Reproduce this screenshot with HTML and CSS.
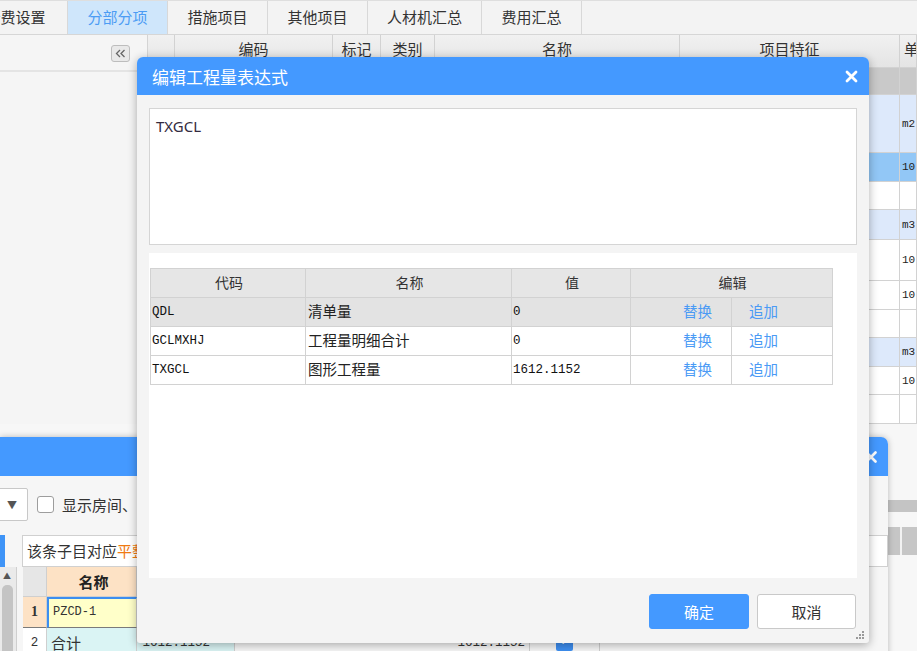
FILE: index.html
```html
<!DOCTYPE html>
<html lang="zh-CN">
<head>
<meta charset="utf-8">
<title>编辑工程量表达式</title>
<link rel="stylesheet" href="styles.css">
</head>
<body>
<div class="app">
  <div class="tabs">
    <div class="tab first">计费设置</div>
    <div class="tab active">分部分项</div>
    <div class="tab">措施项目</div>
    <div class="tab">其他项目</div>
    <div class="tab wide">人材机汇总</div>
    <div class="tab">费用汇总</div>
  </div>
  <div class="work">
    <div class="side">
      <div class="side-head">
        <span class="collapse"><svg width="17" height="15" viewBox="0 0 17 15"><path d="M8 4 L4.5 7.5 L8 11 M12.5 4 L9 7.5 L12.5 11" fill="none" stroke="#666" stroke-width="1.3"/></svg></span>
      </div>
    </div>
    <div class="grid">
      <div class="grow ghead">
        <div class="gc"></div><div class="gc">编码</div><div class="gc">标记</div><div class="gc">类别</div><div class="gc">名称</div><div class="gc">项目特征</div><div class="gc">单位</div>
      </div>
      <div class="grow r-group h27"><div class="gc"></div><div class="gc"></div><div class="gc"></div><div class="gc"></div><div class="gc"></div><div class="gc"></div><div class="gc"></div></div>
      <div class="grow r-blue h58"><div class="gc"></div><div class="gc"></div><div class="gc"></div><div class="gc"></div><div class="gc"></div><div class="gc"></div><div class="gc unit">m2</div></div>
      <div class="grow r-sel h29"><div class="gc"></div><div class="gc"></div><div class="gc"></div><div class="gc"></div><div class="gc"></div><div class="gc"></div><div class="gc unit">10</div></div>
      <div class="grow h28"><div class="gc"></div><div class="gc"></div><div class="gc"></div><div class="gc"></div><div class="gc"></div><div class="gc"></div><div class="gc unit"></div></div>
      <div class="grow r-blue h30"><div class="gc"></div><div class="gc"></div><div class="gc"></div><div class="gc"></div><div class="gc"></div><div class="gc"></div><div class="gc unit">m3</div></div>
      <div class="grow h41"><div class="gc"></div><div class="gc"></div><div class="gc"></div><div class="gc"></div><div class="gc"></div><div class="gc"></div><div class="gc unit">10</div></div>
      <div class="grow h29"><div class="gc"></div><div class="gc"></div><div class="gc"></div><div class="gc"></div><div class="gc"></div><div class="gc"></div><div class="gc unit">10</div></div>
      <div class="grow h28"><div class="gc"></div><div class="gc"></div><div class="gc"></div><div class="gc"></div><div class="gc"></div><div class="gc"></div><div class="gc unit"></div></div>
      <div class="grow r-blue h29"><div class="gc"></div><div class="gc"></div><div class="gc"></div><div class="gc"></div><div class="gc"></div><div class="gc"></div><div class="gc unit">m3</div></div>
      <div class="grow h28"><div class="gc"></div><div class="gc"></div><div class="gc"></div><div class="gc"></div><div class="gc"></div><div class="gc"></div><div class="gc unit">10</div></div>
      <div class="grow h29"><div class="gc"></div><div class="gc"></div><div class="gc"></div><div class="gc"></div><div class="gc"></div><div class="gc"></div><div class="gc unit"></div></div>
    </div>
  </div>
  <div class="lower">
    <div class="lbar"></div>
    <div class="lhead"><span></span></div>
  </div>
</div>

<div class="dlg2">
  <div class="dlg2-head">
    <svg class="x2" width="12" height="12" viewBox="0 0 12 12"><path d="M1.5 1.5 L10.5 10.5 M10.5 1.5 L1.5 10.5" stroke="#fff" stroke-width="2.6" stroke-linecap="round"/></svg>
  </div>
  <div class="dlg2-body">
    <div class="opt-row">
      <div class="select"><span class="caret">▼</span></div>
      <span class="check"></span>
      <span class="opt-text">显示房间、组合构件量</span>
    </div>
    <div class="split">
      <div class="leftcol">
        <div class="bluetab"></div>
        <div class="scroll"><span class="up">▲</span><span class="thumb"></span></div>
      </div>
      <div class="rightcol">
        <div class="info">该条子目对应<span class="orange">平整场地</span>的工程量</div>
        <div class="qt">
          <div class="qrow qhead"><div class="qn"></div><div class="qname">名称</div><div class="qv1"></div><div class="qv2"></div><div class="qck"></div></div>
          <div class="qrow q1"><div class="qn">1</div><div class="qname sel">PZCD-1</div><div class="qv1"></div><div class="qv2"></div><div class="qck"></div></div>
          <div class="qrow q2"><div class="qn">2</div><div class="qname sum">合计</div><div class="qv1 sum">1612.1152</div><div class="qv2">1612.1152</div><div class="qck"><span class="tick">✓</span></div></div>
        </div>
      </div>
    </div>
  </div>
</div>

<div class="dlg">
  <div class="dlg-head">
    <span class="dlg-title">编辑工程量表达式</span>
    <svg class="x1" width="13" height="13" viewBox="0 0 13 13"><path d="M2 2 L11 11 M11 2 L2 11" stroke="#fff" stroke-width="2.8" stroke-linecap="round"/></svg>
  </div>
  <div class="dlg-body">
    <div class="expr">TXGCL</div>
    <div class="vars">
      <table class="vt">
        <thead>
          <tr><th class="c1">代码</th><th class="c2">名称</th><th class="c3">值</th><th class="c4" colspan="2">编辑</th></tr>
        </thead>
        <tbody>
          <tr class="cur"><td class="code">QDL</td><td class="nm">清单量</td><td class="code">0</td><td class="act a1">替换</td><td class="act a2">追加</td></tr>
          <tr><td class="code">GCLMXHJ</td><td class="nm">工程量明细合计</td><td class="code">0</td><td class="act a1">替换</td><td class="act a2">追加</td></tr>
          <tr><td class="code">TXGCL</td><td class="nm">图形工程量</td><td class="code">1612.1152</td><td class="act a1">替换</td><td class="act a2">追加</td></tr>
        </tbody>
      </table>
    </div>
  </div>
  <div class="dlg-foot">
    <button class="btn primary">确定</button>
    <button class="btn">取消</button>
  </div>
  <svg class="grip" width="10" height="10" viewBox="0 0 10 10"><g fill="#9a9a9a"><rect x="7" y="1" width="2" height="2"/><rect x="4" y="4" width="2" height="2"/><rect x="7" y="4" width="2" height="2"/><rect x="1" y="7" width="2" height="2"/><rect x="4" y="7" width="2" height="2"/><rect x="7" y="7" width="2" height="2"/></g></svg>
</div>
</body>
</html>
```

FILE: styles.css
```css
* { box-sizing: border-box; }
html, body {
  margin: 0;
  width: 917px;
  height: 651px;
  overflow: hidden;
  background: #f5f5f5;
  font-family: "Noto Sans", "Noto Sans CJK SC", sans-serif;
  color: #333;
}
body { position: relative; }

/* ---------- app behind ---------- */
.app { display: flex; flex-direction: column; height: 651px; }
.tabs {
  height: 35px;
  display: flex;
  background: #f3f3f3;
  border-top: 1px solid #dedede;
  border-bottom: 1px solid #d6d6d6;
  flex: none;
}
.tab {
  width: 100px;
  border-right: 1px solid #d8d8d8;
  display: flex;
  align-items: center;
  justify-content: center;
  font-family: "Noto Sans CJK SC", sans-serif;
  font-size: 15px;
  color: #333;
  padding-bottom: 2px;
}
.tab.first { margin-left: -36px; width: 104px; }
.tab.wide { width: 114px; }
.tab.active { background: #cfe6fb; color: #4c9cf4; }

.work { display: flex; height: 389px; flex: none; }
.side {
  width: 148px;
  background: #f5f5f5;
  border-right: 1px solid #d4d4d4;
  flex: none;
}
.side-head {
  height: 37px;
  border-bottom: 2px solid #e4e4e4;
  display: flex;
  justify-content: flex-end;
  padding: 10px 17px 0 0;
}
.collapse {
  width: 19px;
  height: 17px;
  border: 1px solid #bdbdbd;
  border-radius: 3px;
  background: #e9e9e9;
  display: flex;
}
.grid { flex: 1; background: #fff; overflow: hidden; }
.grow {
  display: grid;
  grid-template-columns: 27px 158px 48px 54px 245px 220px 1fr;
  border-bottom: 1px solid #d2d2d2;
  background: #fff;
}
.gc { border-right: 1px solid #d2d2d2; }
.ghead {
  height: 33px;
  background: linear-gradient(#f1f1f1, #e4e4e4);
}
.ghead .gc {
  font-family: "Noto Sans CJK SC", sans-serif;
  font-size: 15px;
  text-align: center;
  line-height: 28px;
  color: #333;
  white-space: nowrap;
  overflow: hidden;
}
.ghead .gc:last-child { text-align: left; padding-left: 4px; }
.r-group { background: #c9c9c9; }
.r-blue { background: #dde9fb; }
.r-sel { background: #92c7f6; }
.unit {
  font-family: "Liberation Mono", monospace;
  font-size: 11px;
  display: flex;
  align-items: center;
  padding-left: 2px;
  color: #222;
}
.h27 { height: 27px; }
.h28 { height: 28px; }
.h29 { height: 29px; }
.h30 { height: 30px; }
.h41 { height: 41px; }
.h58 { height: 58px; }

.lower { flex: 1; background: #f7f7f7; padding-top: 76px; }
.lbar { height: 12px; background: #c4c4c4; }
.lhead {
  margin-top: 15px;
  height: 28px;
  background: #c6c6c6;
  display: flex;
  justify-content: flex-end;
}
.lhead span { width: 2px; background: #f2f2f2; margin-right: 15px; }

/* ---------- second window (behind) ---------- */
.dlg2 {
  position: absolute;
  left: 0;
  top: 437px;
  width: 888px;
  height: 240px;
  background: #f6f6f6;
  border-radius: 0 7px 0 0;
  box-shadow: 0 0 6px rgba(0,0,0,.25);
}
.dlg2-head {
  height: 39px;
  background: #4499ff;
  border-radius: 0 7px 0 0;
  display: flex;
  align-items: center;
  justify-content: flex-end;
  padding-right: 11px;
}
.dlg2-body { padding-top: 12px; }
.opt-row { display: flex; align-items: center; height: 33px; }
.select {
  margin-left: -50px;
  width: 78px;
  height: 33px;
  background: #fff;
  border: 1px solid #c8c8c8;
  border-radius: 2px;
  display: flex;
  align-items: center;
  justify-content: flex-end;
  padding-right: 10px;
}
.caret { font-size: 10px; color: #555; }
.check {
  margin-left: 9px;
  width: 17px;
  height: 17px;
  border: 1px solid #9d9d9d;
  border-radius: 3px;
  background: #fff;
}
.opt-text {
  margin-left: 8px;
  font-family: "Noto Sans CJK SC", sans-serif;
  font-size: 15px;
  color: #333;
  white-space: nowrap;
}
.split { display: flex; margin-top: 14px; }
.leftcol { width: 17px; flex: none; }
.bluetab { width: 5px; height: 32px; background: #3f94f7; }
.scroll {
  position: relative;
  height: 90px;
  background: #eaeaea;
  border-right: 1px solid #cfcfcf;
}
.up {
  position: absolute;
  left: 3px;
  top: 3px;
  font-size: 8px;
  color: #555;
}
.thumb {
  position: absolute;
  left: 2px;
  top: 18px;
  width: 11px;
  height: 80px;
  background: #c4c4c4;
  border-radius: 5px;
}
.rightcol { margin-left: 5px; flex: 1; }
.info {
  height: 32px;
  background: #fff;
  border: 1px solid #d0d0d0;
  font-family: "Noto Sans CJK SC", sans-serif;
  font-size: 15px;
  line-height: 29px;
  padding-left: 4px;
  white-space: nowrap;
  overflow: hidden;
  color: #333;
}
.orange { color: #f07a12; }
.qt { margin-left: 1px; }
.qrow { display: flex; }
.qrow > div { border-right: 1px solid #cfcfcf; border-bottom: 1px solid #cfcfcf; }
.qn {
  width: 24px;
  text-align: center;
  font-family: "Liberation Serif", serif;
  font-weight: bold;
  font-size: 14px;
}
.qname { width: 90px; padding-left: 4px; }
.qv1 { width: 98px; text-align: right; padding-right: 24px; }
.qv2 { width: 295px; text-align: right; padding-right: 4px; }
.qck { width: 70px; display: flex; justify-content: center; }
.qhead { height: 30px; }
.qhead .qn { background: #e6e6e6; }
.qhead .qname {
  background: #fde2c5;
  text-align: center;
  font-family: "Noto Sans CJK SC", sans-serif;
  font-weight: bold;
  font-size: 15px;
  line-height: 29px;
  color: #222;
}
.qhead .qv1, .qhead .qv2, .qhead .qck { background: #fde2c5; }
.q1 { height: 31px; }
.q1 .qn { background: #fde2c5; line-height: 30px; }
.q1 > div { border-bottom-color: #7a7a7a; }
.qname.sel {
  background: #ffffc9;
  border-left: 2px solid #3d8ef0;
  border-top: 2px solid #3d8ef0;
  font-family: "Liberation Mono", monospace;
  font-size: 12px;
  line-height: 26px;
}
.q2 { height: 30px; }
.q2 .qn { background: #fff; line-height: 30px; font-weight: normal; }
.q2 > div {
  font-family: "Liberation Mono", monospace;
  font-size: 12.5px;
  line-height: 30px;
}
.sum { background: #daf4f4; }
.q2 .qname.sum { font-family: "Noto Sans CJK SC", sans-serif; font-size: 15px; }
.tick {
  width: 17px;
  height: 17px;
  margin-top: 6px;
  background: #3d8ef0;
  color: #fff;
  font-size: 12px;
  line-height: 17px;
  text-align: center;
  border-radius: 2px;
}

/* ---------- main dialog ---------- */
.dlg {
  position: absolute;
  left: 137px;
  top: 57px;
  width: 732px;
  height: 586px;
  background: #f4f4f4;
  border-radius: 6px 6px 3px 3px;
  box-shadow: 0 2px 10px rgba(0,0,0,.32);
  display: flex;
  flex-direction: column;
}
.dlg-head {
  height: 38px;
  flex: none;
  background: #4499ff;
  border-radius: 6px 6px 0 0;
  display: flex;
  align-items: center;
  justify-content: space-between;
  padding: 0 11px 0 15px;
}
.dlg-title {
  font-family: "Noto Sans CJK SC", sans-serif;
  font-size: 17px;
  color: #fff;
}
.dlg-body { padding: 13px 12px 0; flex: none; }
.expr {
  height: 137px;
  background: #fff;
  border: 1px solid #d5d5d5;
  padding: 7px 6px;
  font-family: "Noto Sans", sans-serif;
  font-size: 15px;
  color: #342b40;
}
.vars {
  margin-top: 8px;
  height: 325px;
  background: #fff;
  padding: 15px 0 0 1px;
}
.vt {
  border-collapse: collapse;
  width: 683px;
  table-layout: fixed;
}
.vt th, .vt td {
  border: 1px solid #d2d2d2;
  height: 29px;
  padding: 0 0 0 2px;
  line-height: 16px;
  vertical-align: middle;
  white-space: nowrap;
  overflow: hidden;
}
.vt th {
  background: #e6e6e6;
  font-family: "Noto Sans CJK SC", sans-serif;
  font-weight: normal;
  font-size: 14px;
  color: #333;
  text-align: center;
  padding-bottom: 2px;
}
.c1 { width: 155px; }
.c2 { width: 206px; }
.c3 { width: 119px; }
.vt tr.cur td { background: #e3e3e3; }
.vt td.code {
  font-family: "Liberation Mono", monospace;
  font-size: 12.5px;
  color: #111;
  padding-left: 1px;
}
.vt td.nm {
  font-family: "Noto Sans CJK SC", sans-serif;
  font-size: 14.5px;
  color: #222;
  padding-bottom: 3px;
}
.vt td.act {
  font-family: "Noto Sans CJK SC", sans-serif;
  font-size: 14.5px;
  color: #4a9af5;
  padding-bottom: 3px;
}
.vt td.a1 { width: 101px; padding-left: 52px; }
.vt td.a2 { padding-left: 17px; }
.dlg-foot {
  display: flex;
  justify-content: flex-end;
  gap: 8px;
  padding: 16px 13px 0 0;
}
.btn {
  width: 100px;
  height: 35px;
  border: 1px solid #c9c9c9;
  border-radius: 3px;
  background: #fff;
  font-family: "Noto Sans CJK SC", sans-serif;
  font-size: 15px;
  color: #333;
  padding: 0;
}
.btn + .btn { width: 99px; }
.btn.primary { background: #4499ff; border-color: #4499ff; color: #fff; }
.grip { position: absolute; right: 4px; bottom: 3px; }
```
